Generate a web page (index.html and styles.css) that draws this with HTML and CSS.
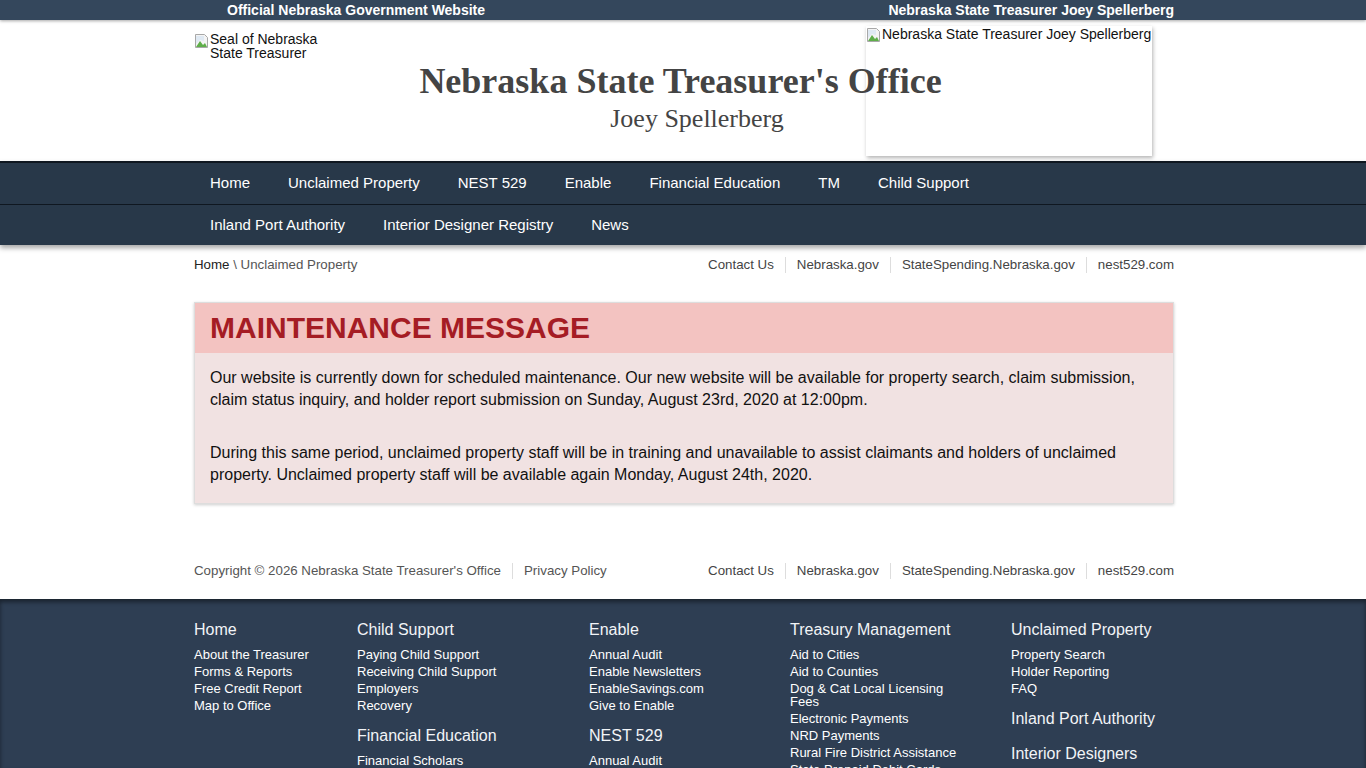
FILE: index.html
```html
<!DOCTYPE html>
<html lang="en">
<head>
<meta charset="utf-8">
<title>Nebraska State Treasurer's Office</title>
<link rel="stylesheet" href="styles.css">
</head>
<body>
<div class="topbar">
  <div class="topbar-inner">
    <span>Official Nebraska Government Website</span>
    <span>Nebraska State Treasurer Joey Spellerberg</span>
  </div>
</div>

<header class="header">
  <div class="header-inner">
    <div class="seal">
      <svg class="broken" width="16" height="16" viewBox="0 0 16 16"><path d="M1.5 1.5h9l3 3v10h-12z" fill="#f4f4f4" stroke="#a8a8a8"/><path d="M2 14l4-6 3 4 2-2 2 4z" fill="#5fae4a"/><path d="M2 3h8v5L6 7 2 11z" fill="#dfe9f3"/></svg>
      <span class="seal-alt">Seal of Nebraska State Treasurer</span>
    </div>
    <div class="portrait">
      <svg class="broken" width="16" height="16" viewBox="0 0 16 16"><path d="M1.5 1.5h9l3 3v10h-12z" fill="#f4f4f4" stroke="#a8a8a8"/><path d="M2 14l4-6 3 4 2-2 2 4z" fill="#5fae4a"/><path d="M2 3h8v5L6 7 2 11z" fill="#dfe9f3"/></svg>
      <span>Nebraska State Treasurer Joey Spellerberg</span>
    </div>
    <div class="titles">
      <h1 class="title">Nebraska State Treasurer's Office</h1>
      <div class="subtitle">Joey Spellerberg</div>
    </div>
  </div>
</header>

<nav class="nav">
  <div class="nav-row first">
    <ul class="nav-inner">
      <li>Home</li>
      <li>Unclaimed Property</li>
      <li>NEST 529</li>
      <li>Enable</li>
      <li>Financial Education</li>
      <li>TM</li>
      <li>Child Support</li>
    </ul>
  </div>
  <div class="nav-row">
    <ul class="nav-inner">
      <li>Inland Port Authority</li>
      <li>Interior Designer Registry</li>
      <li>News</li>
    </ul>
  </div>
</nav>

<main class="main">
  <div class="crumbs">
    <div class="breadcrumb"><span class="bc-home">Home</span> \ Unclaimed Property</div>
    <ul class="util-links">
      <li>Contact Us</li>
      <li>Nebraska.gov</li>
      <li>StateSpending.Nebraska.gov</li>
      <li>nest529.com</li>
    </ul>
  </div>

  <section class="notice">
    <h2 class="notice-title">MAINTENANCE MESSAGE</h2>
    <div class="notice-body">
      <p>Our website is currently down for scheduled maintenance. Our new website will be available for property search, claim submission, claim status inquiry, and holder report submission on Sunday, August 23rd, 2020 at 12:00pm.</p>
      <p>During this same period, unclaimed property staff will be in training and unavailable to assist claimants and holders of unclaimed property. Unclaimed property staff will be available again Monday, August 24th, 2020.</p>
    </div>
  </section>

  <div class="crumbs copyright-row">
    <ul class="util-links left">
      <li>Copyright © 2026 Nebraska State Treasurer's Office</li>
      <li>Privacy Policy</li>
    </ul>
    <ul class="util-links">
      <li>Contact Us</li>
      <li>Nebraska.gov</li>
      <li>StateSpending.Nebraska.gov</li>
      <li>nest529.com</li>
    </ul>
  </div>
</main>

<footer class="footer">
  <div class="footer-inner">
    <div class="fcol c1">
      <div class="fsec">
        <h3>Home</h3>
        <ul>
          <li>About the Treasurer</li>
          <li>Forms &amp; Reports</li>
          <li>Free Credit Report</li>
          <li>Map to Office</li>
        </ul>
      </div>
    </div>
    <div class="fcol c2">
      <div class="fsec">
        <h3>Child Support</h3>
        <ul>
          <li>Paying Child Support</li>
          <li>Receiving Child Support</li>
          <li>Employers</li>
          <li>Recovery</li>
        </ul>
      </div>
      <div class="fsec">
        <h3>Financial Education</h3>
        <ul>
          <li>Financial Scholars</li>
          <li>Money Smart</li>
        </ul>
      </div>
    </div>
    <div class="fcol c3">
      <div class="fsec">
        <h3>Enable</h3>
        <ul>
          <li>Annual Audit</li>
          <li>Enable Newsletters</li>
          <li>EnableSavings.com</li>
          <li>Give to Enable</li>
        </ul>
      </div>
      <div class="fsec">
        <h3>NEST 529</h3>
        <ul>
          <li>Annual Audit</li>
          <li>NEST 529 Newsletters</li>
        </ul>
      </div>
    </div>
    <div class="fcol c4">
      <div class="fsec">
        <h3>Treasury Management</h3>
        <ul>
          <li>Aid to Cities</li>
          <li>Aid to Counties</li>
          <li>Dog &amp; Cat Local Licensing Fees</li>
          <li>Electronic Payments</li>
          <li>NRD Payments</li>
          <li>Rural Fire District Assistance</li>
          <li>State Prepaid Debit Cards</li>
        </ul>
      </div>
    </div>
    <div class="fcol c5">
      <div class="fsec">
        <h3>Unclaimed Property</h3>
        <ul>
          <li>Property Search</li>
          <li>Holder Reporting</li>
          <li>FAQ</li>
        </ul>
      </div>
      <div class="fsec empty">
        <h3>Inland Port Authority</h3>
      </div>
      <div class="fsec">
        <h3>Interior Designers</h3>
        <ul>
          <li>Registry</li>
        </ul>
      </div>
    </div>
  </div>
</footer>
</body>
</html>
```

FILE: styles.css
```css
* { box-sizing: border-box; }
html, body { margin: 0; padding: 0; }
body {
  font-family: "Liberation Sans", Arial, sans-serif;
  background: #fff;
  color: #222;
}
ul { list-style: none; margin: 0; padding: 0; }
h1, h2, h3, p { margin: 0; }

/* shared centred container: content box spans x 194..1174 */
.topbar-inner,
.header-inner,
.main,
.footer-inner {
  width: 982px;
  margin: 0 auto;
  padding-left: 2px;
}

/* top bar */
.topbar {
  background: #34475c;
  height: 20px;
  position: relative;
  z-index: 2;
  box-shadow: 0 1px 3px rgba(0,0,0,0.35);
}
.topbar-inner {
  padding-left: 35px;
  display: flex;
  justify-content: space-between;
  color: #fff;
  font-weight: bold;
  font-size: 14px;
  line-height: 20px;
}

/* header */
.header { height: 141px; background: #fff; }
.header-inner {
  display: grid;
  grid-template-columns: 1fr;
  height: 141px;
}
.header-inner > * { grid-row: 1; grid-column: 1; }
.broken { flex: none; display: block; }
.seal {
  justify-self: start;
  align-self: start;
  margin-top: 12px;
  display: flex;
  font-size: 14px;
  line-height: 14px;
  color: #111;
}
.seal .broken { margin-top: 1px; }
.seal-alt { width: 118px; }
.titles {
  justify-self: center;
  align-self: start;
  text-align: center;
  font-family: "Liberation Serif", "Times New Roman", serif;
  color: #444;
  position: relative;
  z-index: 1;
}
.title {
  font-size: 36px;
  line-height: 38px;
  font-weight: bold;
  margin-top: 42px;
  margin-right: 7px;
}
.subtitle {
  font-size: 26px;
  line-height: 30px;
  margin-top: 4px;
  padding-left: 26px;
}
.portrait {
  justify-self: end;
  align-self: start;
  margin-top: 6px;
  margin-right: 22px;
  width: 286px;
  height: 130px;
  background: #fff;
  box-shadow: 1px 2px 4px rgba(0,0,0,0.3);
  display: flex;
  align-items: flex-start;
  font-size: 14px;
  line-height: 16px;
  color: #111;
}
.portrait .broken { margin-top: 1px; }

/* nav */
.nav {
  position: relative;
  z-index: 1;
  box-shadow: 0 3px 5px rgba(0,0,0,0.35);
}
.nav-row {
  background: #283849;
  border-top: 1px solid #0f1720;
  height: 41px;
}
.nav-row.first { border-top: 2px solid #0f1720; height: 43px; }
.nav-inner {
  width: 988px;
  margin: 0 auto;
  padding-left: 2px;
  display: flex;
}
.nav-inner li {
  padding: 0 19px;
  color: #fff;
  font-size: 15px;
  line-height: 40px;
}

/* main */
.crumbs {
  display: flex;
  justify-content: space-between;
  padding-top: 10px;
  font-size: 13.3px;
  line-height: 20px;
  color: #555;
}
.bc-home { color: #222; }
.util-links { display: flex; }
.util-links li {
  padding: 0 11px;
  border-left: 1px solid #ddd;
  line-height: 16px;
  margin-top: 2px;
  height: 16px;
  color: #444;
}
.util-links li:first-child { border-left: 0; padding-left: 0; }
.util-links li:last-child { padding-right: 0; }
.util-links.left li { color: #555; }

.notice {
  margin-top: 27px;
  border: 1px solid #ddd;
  box-shadow: 0 1px 3px rgba(0,0,0,0.2);
  background: #f1e2e2;
}
.notice-title {
  background: #f3c3c1;
  color: #a51c24;
  font-size: 30px;
  line-height: 50px;
  font-weight: bold;
  padding-left: 15px;
}
.notice-body {
  padding: 14px 15px 17px;
  font-size: 16px;
  line-height: 22px;
  color: #111;
}
.notice-body p + p { margin-top: 31px; }

.copyright-row {
  padding-top: 0;
  margin-top: 57px;
  height: 38px;
}

/* footer */
.footer {
  background: #2e3e53;
  box-shadow: inset 0 3px 4px rgba(0,0,0,0.45);
  height: 169px;
  overflow: hidden;
}
.footer-inner {
  display: grid;
  grid-template-columns: 163px 232px 201px 221px 163px;
  padding-top: 21px;
  color: #fff;
}
.fcol.c4 { padding-right: 48px; }
.fsec { margin-bottom: 14px; }
.fsec h3 {
  font-weight: normal;
  font-size: 16px;
  line-height: 20px;
  color: #f2f4f7;
  margin-bottom: 8px;
}
.fsec.empty h3 { margin-bottom: 15px; }
.fsec.empty { margin-bottom: 0; }
.fsec li {
  font-size: 13px;
  line-height: 13px;
  margin-bottom: 4px;
  color: #fff;
}
```
